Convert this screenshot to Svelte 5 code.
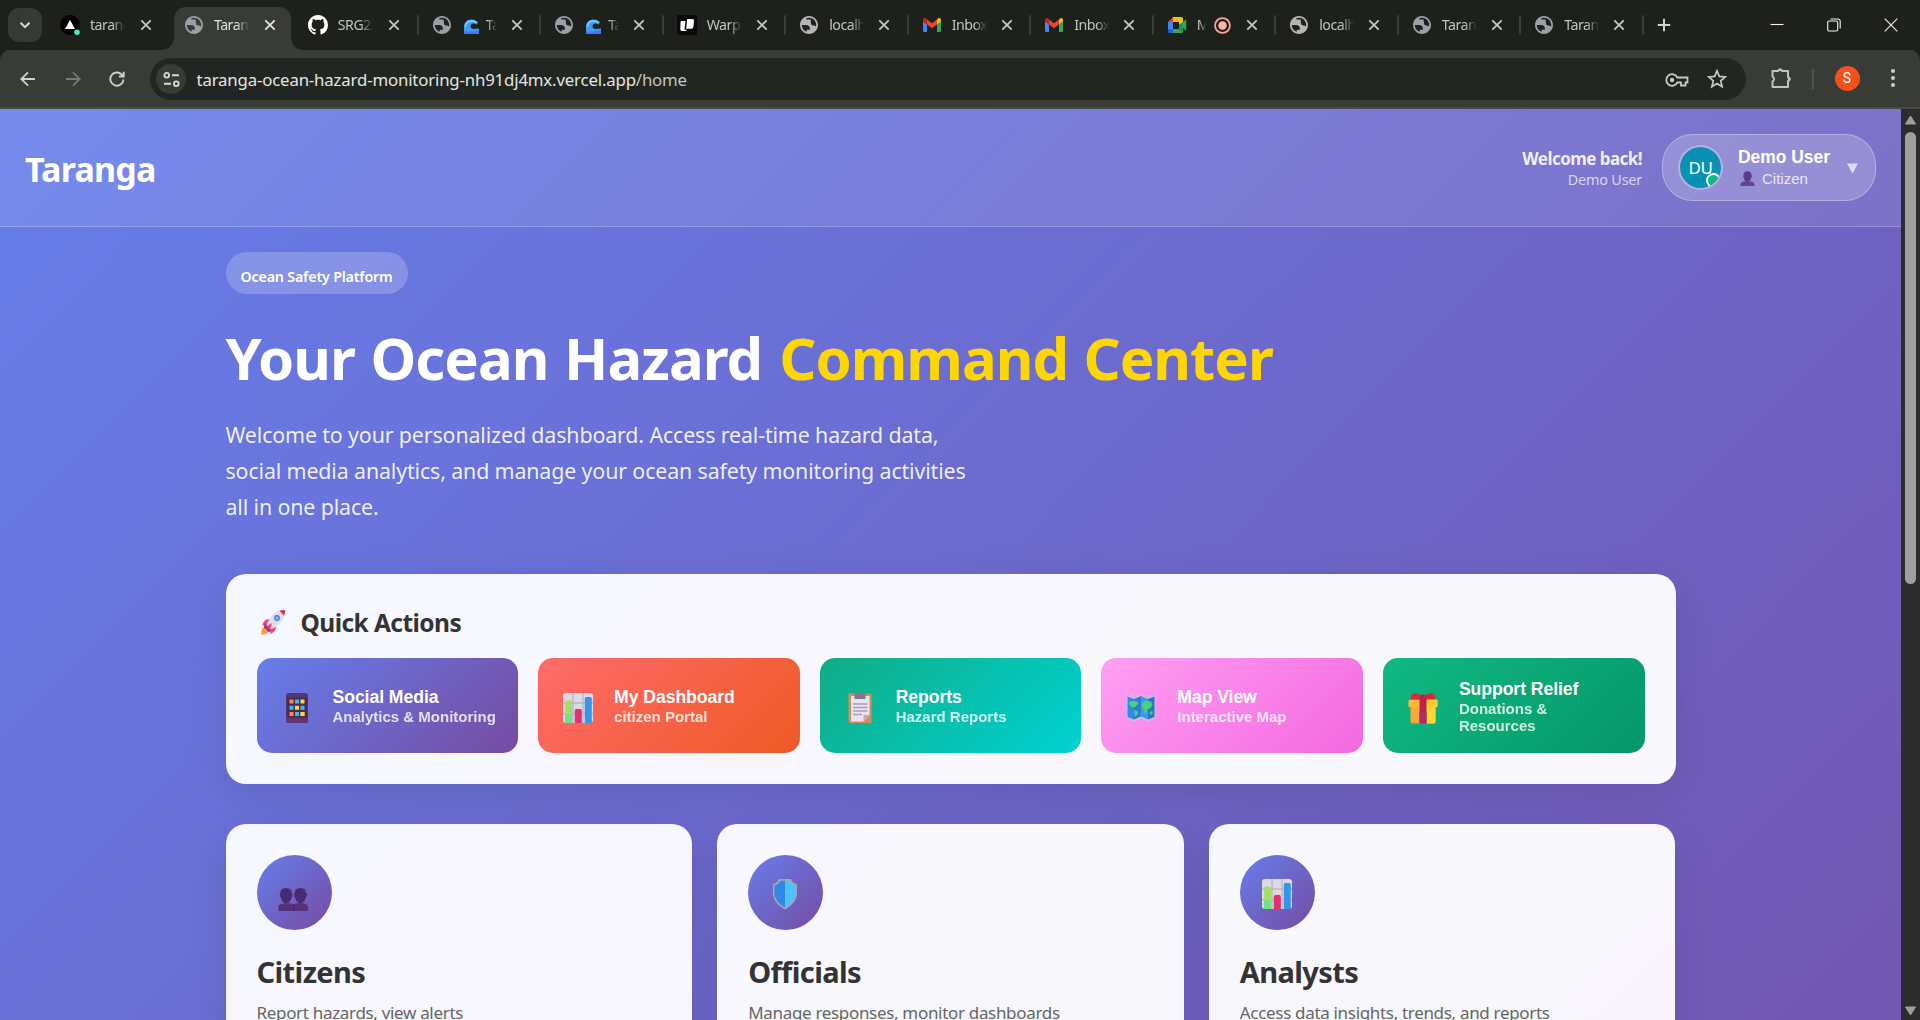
<script>
  const tabs = [
    { icon: 'vercel', title: 'taranga', wide: true, first: true },
    { icon: 'globe', title: 'Taranga', wide: true, active: true },
    { icon: 'github', title: 'SRG22', wide: true, sep: true },
    { icon: 'globe', title: 'Ta', wave: true, sep: true },
    { icon: 'globe', title: 'Ta', wave: true, sep: true },
    { icon: 'warp', title: 'Warp', sep: true },
    { icon: 'globe', title: 'localh', plain: true, sep: true },
    { icon: 'gmail', title: 'Inbox', sep: true },
    { icon: 'gmail', title: 'Inbox', sep: true },
    { icon: 'meet', title: 'M', rec: true, sep: true },
    { icon: 'globe', title: 'localh', plain: true, sep: true },
    { icon: 'globe', title: 'Taran', sep: true },
    { icon: 'globe', title: 'Taran', sep: true },
  ];

  const actions = [
    { kind: 'social', icon: 'phone', title: 'Social Media', sub: 'Analytics & Monitoring' },
    { kind: 'dashboard', icon: 'chart', title: 'My Dashboard', sub: 'citizen Portal' },
    { kind: 'reports', icon: 'clipboard', title: 'Reports', sub: 'Hazard Reports' },
    { kind: 'map', icon: 'map', title: 'Map View', sub: 'Interactive Map' },
    { kind: 'relief', icon: 'gift', title: 'Support Relief', sub: 'Donations & Resources' },
  ];

  const roles = [
    { icon: 'people', title: 'Citizens', text: 'Report hazards, view alerts' },
    { icon: 'shield', title: 'Officials', text: 'Manage responses, monitor dashboards' },
    { icon: 'chart', title: 'Analysts', text: 'Access data insights, trends, and reports' },
  ];
</script>

{#snippet favicon(name, plain)}
  {#if name === 'vercel'}
    <svg class="fav" viewBox="0 0 20 20">
      <circle cx="10" cy="10" r="10" fill="#000" />
      <path d="M10 5l5 9H5z" fill="#fff" />
      <circle cx="17" cy="17.3" r="2.8" fill="#50e3c2" />
    </svg>
  {:else if name === 'globe'}
    <svg class="fav globe" class:plain viewBox="2 2 20 20">
      <path d="M12 2C6.48 2 2 6.48 2 12s4.48 10 10 10 10-4.48 10-10S17.52 2 12 2zM4 12h4.4c3.4 0 4.9 1.7 4.6 5.2H9.5v2.4C6.2 18.6 4 15.6 4 12zm10-4.500c-.3-.7.1-1.100-.3-1.500H9V4.600C9.900 4.200 10.900 4 12 4c4.400 0 8 3.600 8 8 0 .6-.1 1.200-.2 1.800-.7-.8-1.500-1.300-2.600-1.300-2.800 0-3.200-1.600-3.200-5z" fill-rule="evenodd" />
    </svg>
  {:else if name === 'github'}
    <svg class="fav" viewBox="0 0 16 16">
      <path fill="#fff" d="M8 0C3.580 0 0 3.580 0 8c0 3.540 2.290 6.530 5.470 7.590.4.070.55-.17.55-.38 0-.19-.01-.82-.01-1.490-2.010.37-2.530-.49-2.690-.94-.09-.23-.48-.94-.82-1.130-.28-.15-.68-.52-.01-.53.63-.01 1.080.58 1.230.82.72 1.210 1.870.87 2.330.66.07-.52.28-.87.51-1.070-1.780-.2-3.640-.89-3.640-3.950 0-.87.31-1.590.82-2.150-.08-.2-.36-1.020.08-2.120 0 0 .67-.21 2.200.82.64-.18 1.320-.27 2-.27s1.360.09 2 .27c1.530-1.040 2.200-.82 2.200-.82.44 1.100.16 1.920.08 2.120.51.56.82 1.270.82 2.150 0 3.070-1.870 3.750-3.650 3.950.29.25.54.73.54 1.480 0 1.070-.01 1.930-.01 2.200 0 .21.15.46.55.38A8.010 8.010 0 0 0 16 8c0-4.420-3.580-8-8-8z" />
    </svg>
  {:else if name === 'warp'}
    <svg class="fav" viewBox="0 0 20 20">
      <rect width="20" height="20" fill="#0b0b0b" />
      <path d="M10.200 4h5a1.800 1.800 0 0 1 1.800 2l-.6 5.800a2 2 0 0 1-2 1.900H9.200zM4.800 6h3.700l-1 8.700h2l-.2 1.300H4.900A1.600 1.600 0 0 1 3.300 14.300l.2-7A1.400 1.400 0 0 1 4.800 6z" fill="#fff" />
    </svg>
  {:else if name === 'gmail'}
    <svg class="fav" viewBox="0 0 20 20">
      <path d="M1 6v9.500A1.500 1.500 0 0 0 2.500 17H5V9.500z" fill="#4285f4" />
      <path d="M19 6v9.500a1.500 1.500 0 0 1-1.500 1.500H15V9.500z" fill="#34a853" />
      <path d="M15 4.500v5L19 6.500V5c0-1.900-2-2.700-3.300-1.500z" fill="#fbbc04" />
      <path d="M5 9.500v-5l5 3.800 5-3.800v5l-5 3.800z" fill="#ea4335" />
      <path d="M1 5v1.500l4 3v-5L4.300 3.500C3 2.500 1 3.200 1 5z" fill="#c5221f" />
    </svg>
  {:else if name === 'meet'}
    <svg class="fav" viewBox="0 0 20 20">
      <path d="M1 7l5-5v5z" fill="#ea4335" />
      <path d="M1 7h5v7H1z" fill="#4285f4" />
      <path d="M1 14h5v4H2.500A1.500 1.500 0 0 1 1 16.500z" fill="#1967d2" />
      <path d="M6 14h6l4 3a1.500 1.500 0 0 1-1.500 1H6z" fill="#34a853" />
      <path d="M6 2h8.500A1.500 1.500 0 0 1 16 3.500V8l-4 2V7H6z" fill="#fbbc04" />
      <path d="M12 10l4-3v10l-4-3z" fill="#0f9d58" />
      <path d="M16 7l2.600-2.200c.3-.2.600 0 .600.300v9.800c0 .3-.3.500-.6.300L16 13z" fill="#34a853" />
    </svg>
  {/if}
{/snippet}

{#snippet cross()}
  <svg class="cross" viewBox="0 0 12 12"><path d="M1.300 1.300l9.400 9.400M10.700 1.300l-9.400 9.400" /></svg>
{/snippet}

{#snippet glyph(name)}
  {#if name === 'rocket'}
    <svg class="glyph" viewBox="0 0 36 36">
      <path d="M6 25c-1 3-1.500 5.500-1.200 7 1.800.2 5-.2 7-2 1.600-1.600 1.500-3.500.5-4.500s-4.500-2.300-6.300-.5z" fill="#ff9a2e" />
      <path d="M14 15c-4-1-7 2-8 7l6-1zM21 22c1 4-1 7.500-6 9.500l.5-7z" fill="#f8417f" />
      <path d="M31.500 4.500C23 4 16 9 10.500 21.500l4.500 5C26 22 32 14 31.500 4.500z" fill="#e3dbea" />
      <path d="M31.500 4.500c-2.300-.1-4.300.2-6.200.9l5.200 5.600c.7-2 1-4.200 1-6.500z" fill="#e9284b" />
      <path d="M9 19.500l7.500 8.200-3.200 1.800L7.500 24z" fill="#b02f86" />
      <path d="M11 23l6-4-2 7z" fill="#f23f6e" />
      <circle cx="22.500" cy="13.500" r="3.300" fill="#4f78c4" />
      <circle cx="22.500" cy="13.500" r="2" fill="#6fc0ff" />
    </svg>
  {:else if name === 'phone'}
    <svg class="glyph" viewBox="0 0 36 36">
      <rect x="7" y="3" width="22" height="30" rx="2.500" fill="#493b78" />
      <rect x="8" y="7.500" width="20" height="20" fill="#50284f" />
      <path d="M7 28h22v2.500A2.500 2.500 0 0 1 26.500 33h-17A2.500 2.500 0 0 1 7 30.500z" fill="#603475" />
      <path d="M10.500 9.500h4v4h-4zM21.500 22h4v4h-4zM10.500 22h4v4h-4z" fill="#ff8b42" />
      <path d="M16 9.500h4v4h-4zM10.500 15.700h4v4h-4zM21.500 15.700h4v4h-4zM16 22h4v4h-4z" fill="#37b9f6" />
      <path d="M21.500 9.500h4v4h-4zM16 15.700h4v4h-4zM21.500 22h4v4h-4z" fill="#ffd94a" />
    </svg>
  {:else if name === 'chart'}
    <svg class="glyph" viewBox="0 0 36 36">
      <rect x="3" y="3" width="30" height="30" rx="3" fill="#ded8e5" />
      <path d="M3 13h30M3 23.500h30M13 3v30M23 3v30" stroke="#bcb4c4" stroke-width="1.300" />
      <path d="M5.200 12a1.500 1.500 0 0 1 1.500-1.500H10.500A1.500 1.500 0 0 1 12 12v21H5.200z" fill="#a0e15f" />
      <path d="M5.200 24H12v9H5.200z" fill="#6fe283" />
      <path d="M14.800 20.500a1.500 1.500 0 0 1 1.500-1.500h4a1.500 1.500 0 0 1 1.500 1.500V33h-7z" fill="#e3306f" />
      <path d="M24.800 8.500A1.500 1.500 0 0 1 26.300 7h4a1.500 1.500 0 0 1 1.500 1.500V33h-7z" fill="#3496e8" />
    </svg>
  {:else if name === 'clipboard'}
    <svg class="glyph" viewBox="0 0 36 36">
      <rect x="6.500" y="3.500" width="23" height="29.500" rx="1.500" fill="#d98c5b" />
      <path d="M9 6h18.500v19l-6 6.500H9z" fill="#eae3f3" />
      <path d="M21.500 31.500V25h6z" fill="#b9aec2" />
      <path d="M12.500 3.500h3.300a2.300 2.300 0 0 1 4.400 0h3.300V9h-11z" fill="#837886" />
      <path d="M11 14h14.500M11 17.500h14.500M11 21h14.500M11 24.500h9" stroke="#a79db5" stroke-width="1.300" />
    </svg>
  {:else if name === 'map'}
    <svg class="glyph" viewBox="0 0 36 36">
      <path d="M3.500 4.500L11 7.500l7-3 7 3 7.500-3V28L25 31.500l-7-3-7 3L3.500 28z" fill="#c6c2de" />
      <path d="M4.500 6.500L11 9v20.500l-6.500-2.500z" fill="#2d8be6" />
      <path d="M11 9l7-3v20.500l-7 3z" fill="#2f7cd0" />
      <path d="M18 6l7 3v20.500l-7-3z" fill="#379bf0" />
      <path d="M25 9l6.500-2.500V27L25 29.500z" fill="#2b75c9" />
      <path d="M5.500 12.500l4-1.500 5 .500 1 2-3.500 3.500-2 .5-3-2zM11 20l4 1.500-.5 3-2.500 2.500zM19 13l4-2.500 5 1 1.500 3.500-2.500 3.500-2.500.5-1.500 4-2-.5-.5-4-2-2zM26.500 22l3-1v3l-2 1z" fill="#4bd17c" />
    </svg>
  {:else if name === 'gift'}
    <svg class="glyph" viewBox="0 0 36 36">
      <path d="M5.500 13h25v19a1.500 1.500 0 0 1-1.500 1.500H7A1.500 1.500 0 0 1 5.500 32z" fill="#f5a93b" />
      <path d="M21 13h9.500v19a1.500 1.500 0 0 1-1.500 1.500h-8z" fill="#fbd92e" />
      <path d="M5 9.500h26a1.500 1.500 0 0 1 1.500 1.500v6h-29v-6A1.500 1.500 0 0 1 5 9.500z" fill="#fdb73c" />
      <path d="M21 9.500h10a1.500 1.500 0 0 1 1.500 1.500v6H21z" fill="#ffcd33" />
      <path d="M6 9.500c-1.500-4 2-7.500 6-6l3 1.500h6l3.500-1.500c4-1.500 7 2 5.500 6z" fill="#de2839" />
      <path d="M14.500 5.500c1-1.500 6-1.500 7 0v28h-7z" fill="#bd2248" />
      <path d="M14.500 22h7v11.500h-7z" fill="#b12967" />
    </svg>
  {:else if name === 'people'}
    <svg class="glyph" viewBox="0 0 36 36">
      <path d="M2.500 35v-4.500c0-2 3-2.700 6-3.200h5c2 .3 3.500.5 4.200 1.200.7-.7 2.200-.9 4.200-1.200h5c3 .5 5 1.200 5 3.200V35z" fill="#57307c" />
      <path d="M17.700 28.500V35" stroke="#3f2163" stroke-width="1" />
      <path d="M4.500 17c0-3 1.200-4.700 5.700-4.700s5.700 1.700 5.700 4.700c1 .2.900 3.500-.2 4-.7 3.800-3 6.300-5.500 6.300s-4.800-2.500-5.500-6.300c-1.100-.5-1.200-3.800-.2-4zM18.800 17c0-3 1.200-4.700 5.700-4.700s5.700 1.700 5.700 4.700c1 .2.900 3.500-.2 4-.7 3.800-3 6.300-5.500 6.300s-4.800-2.500-5.500-6.300c-1.100-.5-1.200-3.800-.2-4z" fill="#472a70" />
      <path d="M13 13.500c1.500.6 2.200 1.700 2.200 3.500M27.300 13.500c1.500.6 2.200 1.700 2.200 3.500" stroke="#6b41a0" stroke-width="1" fill="none" />
    </svg>
  {:else if name === 'shield'}
    <svg class="glyph" viewBox="0 0 36 36">
      <path d="M12 3h12c1 3 3 4.500 6 5v9c0 7-5 12.500-12 16.500C11 29.500 6 24 6 17V8c3-.5 5-2 6-5z" fill="#a9a5ae" />
      <path d="M18 4.800h-4.800c-1 2.600-3 4.200-5.700 4.800V17c0 6 4.500 11 10.500 14.700z" fill="#2f87ea" />
      <path d="M18 4.800h4.800c1 2.600 3 4.200 5.700 4.800V17c0 6-4.500 11-10.500 14.700z" fill="#50c1ff" />
    </svg>
  {/if}
{/snippet}

<div class="window">
  <div class="tabstrip">
    <button class="tab-search" aria-label="Search tabs">
      <svg viewBox="0 0 14 14" width="14" height="14"><path d="M2.500 4.700L7 9.200l4.500-4.500" /></svg>
    </button>
    {#each tabs as t}
      <div class="tab" class:first={t.first} class:wide={t.wide} class:active={t.active} class:sep={t.sep}>
        {@render favicon(t.icon, t.plain)}
        {#if t.wave}
          <svg class="wave" viewBox="0 0 16 16">
            <path d="M0 16V8C0 3.500 3.500.5 8 .5c3.500 0 6 1.500 7.500 4L13 4.500l1 2-2-1.500c-3-1-5 .5-5 3 0 2 1.500 3 5 2.500l4-.5v6z" fill="#3f9bf3" />
            <path d="M1.500 8.500C1.500 5 4 2 8 2c2.500 0 4 .8 5.500 2.300" stroke="#6fd0ff" stroke-width="1.800" fill="none" />
            <path d="M0 12.500c4 1.500 10 1 16-.5v4H0z" fill="#3a7df0" />
          </svg>
        {/if}
        <span class="tab-title" class:narrow={t.wave} class:tiny={t.rec}>{t.title}</span>
        {#if t.rec}
          <svg class="rec" viewBox="0 0 16 16"><circle cx="8" cy="8" r="7" /><circle class="core" cx="8" cy="8" r="4" /></svg>
        {/if}
        {@render cross()}
      </div>
    {/each}
    <svg class="new-tab" viewBox="0 0 14 14"><path d="M7 .8v12.400M.8 7h12.400" /></svg>
    <div class="window-buttons">
      <svg viewBox="0 0 14 14"><path d="M.5 6.500h13" /></svg>
      <svg viewBox="0 0 14 14"><path d="M.7 4.500A1.500 1.500 0 0 1 2.200 3h7A1.500 1.500 0 0 1 10.700 4.500v7a1.500 1.500 0 0 1-1.500 1.500h-7A1.500 1.500 0 0 1 .7 11.500zM3.500 1h7.300A2.300 2.300 0 0 1 13.200 3.300v7.200" /></svg>
      <svg viewBox="0 0 14 14"><path d="M.7.7l12.600 12.600M13.300.7L.7 13.300" /></svg>
    </div>
  </div>

  <div class="toolbar">
    <svg class="nav" viewBox="0 0 16 16"><path d="M15 8H1.500M8 1.300L1.300 8 8 14.700" /></svg>
    <svg class="nav dim" viewBox="0 0 16 16"><path d="M1 8h13.500M8 1.300L14.700 8 8 14.700" /></svg>
    <svg class="nav reload" viewBox="0 0 16 16"><path d="M14.500 8.500A6.600 6.600 0 1 1 12.700 3.500L14.500 5.300M14.700.8v4.700H10" /></svg>
    <div class="omnibox">
      <span class="site">
        <svg viewBox="0 0 16 16"><circle cx="3.500" cy="4" r="2.200" /><path d="M8.500 4H15M1 12h6.500" /><circle cx="12.500" cy="12" r="2.200" /></svg>
      </span>
      <span class="url">taranga-ocean-hazard-monitoring-nh91dj4mx.vercel.app<span class="path">/home</span></span>
      <svg class="key" viewBox="0 0 24 14">
        <path d="M12.300 4.500h10.200v5h-2v3h-4.500v-3h-3.700A5.800 5.800 0 1 1 12.300 4.500z" />
        <circle cx="7" cy="7" r="2.200" />
      </svg>
      <svg class="star" viewBox="0 0 20 20"><path d="M10 1.800l2.300 5.600 6 .5-4.600 3.900 1.400 5.900L10 14.500l-5.100 3.200 1.400-5.900L1.700 7.900l6-.5z" /></svg>
    </div>
    <svg class="puzzle" viewBox="0 0 22 22">
      <path d="M2.500 4h5.700a2 2 0 0 1 3.800 0H18v6.200a2 2 0 0 1 0 3.800v6H2.500v-5.500a2.800 2.800 0 0 0 0-5z" />
      <path class="solid" d="M7.500 4a2.600 2.600 0 0 1 5.200 0zM18 9.500a2.600 2.600 0 0 1 0 5.200z" />
    </svg>
    <span class="bar"></span>
    <span class="profile">S</span>
    <svg class="dots" viewBox="0 0 4 18"><circle cx="2" cy="2" r="2" /><circle cx="2" cy="9" r="2" /><circle cx="2" cy="16" r="2" /></svg>
  </div>

  <div class="viewport">
    <div class="page">
      <header>
        <div class="logo">Taranga</div>
        <div class="welcome">
          <div class="hello">Welcome back!</div>
          <div class="name">Demo User</div>
        </div>
        <div class="user">
          <div class="avatar">DU<span class="online"></span></div>
          <div class="who">
            <div class="who-name">Demo User</div>
            <div class="who-role">
              <svg viewBox="0 0 16 16">
                <path d="M.5 16v-2c0-2 2.500-2.500 5.500-3h4c3 .5 5.500 1 5.500 3v2z" fill="#65429c" />
                <path d="M3.800 4.500C3.800 1.500 5 .3 8 .3s4.200 1.200 4.200 4.200c.7 0 .7 2-.1 2.300C11.500 9.500 10 11.500 8 11.500S4.500 9.500 3.900 6.800c-.8-.3-.8-2.300-.1-2.300z" fill="#5b3c8e" />
              </svg>
              <span>Citizen</span>
            </div>
          </div>
          <svg class="caret" viewBox="0 0 12 11"><path d="M0 0h12L6 11z" /></svg>
        </div>
      </header>

      <main>
        <div class="badge">Ocean Safety Platform</div>
        <h1>Your Ocean Hazard <span>Command Center</span></h1>
        <p class="lead">
          Welcome to your personalized dashboard. Access real-time hazard data,<br />social media analytics, and manage your ocean safety monitoring activities<br />all in one place.
        </p>

        <section class="quick">
          <h2>{@render glyph('rocket')}Quick Actions</h2>
          <div class="actions">
            {#each actions as a}
              <button class="action {a.kind}">
                {@render glyph(a.icon)}
                <span class="labels"><span class="title">{a.title}</span><span class="sub">{a.sub}</span></span>
              </button>
            {/each}
          </div>
        </section>

        <section class="roles">
          {#each roles as r}
            <article>
              <div class="disc {r.icon}">{@render glyph(r.icon)}</div>
              <h3>{r.title}</h3>
              <p>{r.text}</p>
            </article>
          {/each}
        </section>
      </main>
    </div>
    <div class="scrollbar">
      <svg class="up" viewBox="0 0 12 10"><path d="M6 1l5 8H1z" /></svg>
      <div class="track"><div class="thumb"></div></div>
      <svg class="down" viewBox="0 0 12 10"><path d="M6 9l5-8H1z" /></svg>
    </div>
  </div>
</div>

<style>
  :global(body) { margin: 0; overflow: hidden; background: #1d201b; }
  .window {
    width: 1920px; height: 1020px; overflow: hidden; display: flex; flex-direction: column;
    font-family: 'Noto Sans', 'Open Sans', sans-serif;
  }
  svg { display: block; flex: none; }
  button { border: 0; margin: 0; padding: 0; text-align: left; }

  /* tab strip */
  .tabstrip { height: 50px; flex: none; display: flex; align-items: center; background: #1d201b; }
  .tab-search {
    width: 34px; height: 34px; margin: 0 3px 0 8px; border-radius: 11px; background: #363a34;
    display: flex; align-items: center; justify-content: center; flex: none;
  }
  .tab-search path { fill: none; stroke: #d8dcd2; stroke-width: 2; }
  .tab {
    position: relative; box-sizing: border-box; width: 122.500px; height: 50px; padding: 0 12px 0 14px;
    display: flex; align-items: center; flex: none; color: #c2c6bd;
  }
  .tab.first { margin-left: 1px; }
  .tab.wide { width: 123.900px; }
  .fav { width: 20px; height: 20px; margin-right: 10px; }
  .globe { width: 18px; height: 18px; margin: 0 11px 0 1px; fill: #9aa0a8; }
  .globe.plain { fill: #b5b5b5; }
  .wave { width: 15px; height: 15px; margin: 2px 7px 0 2px; }
  .tab-title {
    width: 36px; overflow: hidden; white-space: nowrap; font-size: 14.200px; letter-spacing: -0.500px; line-height: 22px; margin-top: -1px;
    mask-image: linear-gradient(90deg, #000 62%, transparent 98%);
  }
  .tab-title.narrow { width: 12px; mask-image: linear-gradient(90deg, #000 10%, transparent 95%); }
  .tab-title.tiny { width: 9px; margin-right: 8px; mask-image: linear-gradient(90deg, #000 30%, transparent 105%); }
  .cross { width: 12px; height: 12px; margin-left: auto; margin-right: 5.500px; }
  .cross path { fill: none; stroke: #c5c9c0; stroke-width: 1.800; }
  .rec { width: 17px; height: 17px; }
  .rec circle { fill: none; stroke: #f3a99c; stroke-width: 1.700; }
  .rec .core { fill: #ffb4a6; stroke: none; }
  .tab.active::before {
    content: ''; position: absolute; left: 4px; right: 3px; top: 7px; bottom: 0; background: #393c36;
    border-radius: 12px 12px 0 0;
  }
  .tab.active::after {
    content: ''; position: absolute; left: -8px; right: -9px; bottom: 0; height: 12px;
    background:
      radial-gradient(circle at 0 0, transparent 11.500px, #393c36 12px) left / 12px 12px no-repeat,
      radial-gradient(circle at 100% 0, transparent 11.500px, #393c36 12px) right / 12px 12px no-repeat;
  }
  .tab.active > :global(*) { z-index: 1; }
  .tab.active { color: #dfe2db; }
  .tab.active .cross path { stroke: #e3e6df; }
  .tab.sep::after {
    content: ''; position: absolute; right: -1px; top: 15px; width: 2px; height: 20px; border-radius: 1px; background: #393d37;
  }
  .new-tab { width: 14px; height: 14px; margin-left: 14.500px; }
  .new-tab path { stroke: #d0d4cb; stroke-width: 2; }
  .window-buttons { display: flex; gap: 43px; margin-left: auto; margin-right: 22px; }
  .window-buttons svg { width: 14px; height: 14px; }
  .window-buttons path { fill: none; stroke: #f1f2ef; stroke-width: 1.100; }

  /* toolbar */
  .toolbar {
    height: 59px; flex: none; box-sizing: border-box; padding: 8px 25.500px 9px 20px; border-bottom: 2px solid #474a47;
    display: flex; align-items: flex-start; background: #393c36;
    border-radius: 10px 10px 0 0;
  }
  .nav { width: 16px; height: 16px; margin: 13px 28.500px 0 0; }
  .nav path { fill: none; stroke: #cdd1c8; stroke-width: 1.900; }
  .nav.dim path { stroke: #767a72; }
  .nav.reload { margin-right: 25px; }
  .omnibox {
    width: 1596px; height: 42px; border-radius: 21px; background: #222622; box-sizing: border-box; flex: none;
    padding: 0 19px 0 6px; display: flex; align-items: center;
  }
  .site { width: 30px; height: 30px; border-radius: 50%; background: #383c36; display: flex; align-items: center; justify-content: center; }
  .site svg { width: 17px; height: 17px; }
  .site svg * { fill: none; stroke: #d8dcd3; stroke-width: 1.700; }
  .url { margin-left: 10.500px; margin-top: 1px; font-size: 16.800px; letter-spacing: -0.160px; color: #e4e7e0; line-height: 24px; }
  .path { color: #c3c7be; }
  .key { width: 24px; height: 14px; margin-left: auto; margin-top: 1px; }
  .key path { fill: none; stroke: #c6cac1; stroke-width: 1.800; }
  .key circle { fill: #c6cac1; }
  .star { width: 20px; height: 20px; margin-left: 18px; }
  .star path { fill: none; stroke: #c6cac1; stroke-width: 1.700; }
  .puzzle { width: 22px; height: 22px; margin: 9px 0 0 24px; }
  .puzzle path { fill: none; stroke: #c0c4bb; stroke-width: 2; stroke-linejoin: round; }
  .puzzle .solid { fill: #c0c4bb; stroke: none; }
  .bar { width: 2px; height: 20px; margin: 11px 0 0 20px; background: #50544d; }
  .profile {
    width: 25px; height: 25px; margin: 8px 0 0 20.500px; border-radius: 50%; background: #f4511e; color: #fff;
    font: 14px/25px Roboto, sans-serif; text-align: center; flex: none;
  }
  .dots { width: 4px; height: 18px; margin: 11px 0 0 auto; fill: #cdd1c8; }

  /* page */
  .viewport { flex: 1; min-height: 0; display: flex; overflow: hidden; background: #2c2c2c; }
  .page { width: 1901px; height: 1748px; flex: none; background: linear-gradient(135deg, #667eea 0%, #764ba2 100%); }
  header {
    box-sizing: border-box; height: 118px; padding: 0 25px; display: flex; align-items: center;
    background: rgba(255, 255, 255, 0.1); border-bottom: 1px solid rgba(255, 255, 255, 0.200);
  }
  .logo { font-size: 34px; font-weight: 700; letter-spacing: -0.800px; color: #fff; margin-top: 3px; }
  .welcome { margin-left: auto; text-align: right; margin-right: 20px; }
  .hello { font-size: 17px; font-weight: 700; letter-spacing: -0.550px; line-height: 23px; color: rgba(255, 255, 255, 0.9); }
  .name { font-size: 14.400px; letter-spacing: -0.200px; line-height: 19px; color: rgba(255, 255, 255, 0.7); }
  .user {
    box-sizing: border-box; width: 214px; height: 67px; border-radius: 31px; padding: 0 17px 0 15px;
    display: flex; align-items: center; background: rgba(255, 255, 255, 0.200); border: 1px solid rgba(255, 255, 255, 0.300);
    font-family: 'Liberation Sans', Arial, sans-serif;
  }
  .avatar {
    position: relative; box-sizing: border-box; width: 45px; height: 45px; border-radius: 50%; overflow: hidden;
    border: 2px solid rgba(255, 255, 255, 0.3); background: #0891b2; background-clip: padding-box; color: #fff;
    font: 17px/41px 'Noto Sans', sans-serif; letter-spacing: -0.300px; text-align: center;
  }
  .online {
    position: absolute; right: 0; bottom: 0; width: 11px; height: 11px; border-radius: 50%;
    background: #10b981; border: 2px solid #fff;
  }
  .who { margin-left: 15px; }
  .who-name { font-size: 17.500px; line-height: 20px; font-weight: 700; color: #fff; letter-spacing: -0.050px; }
  .who-role { display: flex; align-items: center; margin-top: 2px; font-size: 15px; line-height: 19px; color: rgba(255, 255, 255, 0.800); }
  .who-role svg { width: 15px; height: 15px; margin: 0 7px 0 2px; }
  .caret { width: 11px; height: 11px; margin-left: auto; margin-top: 1px; fill: rgba(255, 255, 255, 0.700); }

  main { width: 1450px; margin: 0 auto; padding-top: 25px; }
  .badge {
    display: block; width: fit-content; height: 42px; box-sizing: border-box; padding: 10px 15px 0; border-radius: 21px;
    background: rgba(255, 255, 255, 0.2); color: #fff; font-size: 14.300px; font-weight: 600; letter-spacing: -0.200px; line-height: 30px;
  }
  h1 { margin: 27.500px 0 0; font-size: 58px; line-height: 72px; font-weight: 700; letter-spacing: -0.930px; word-spacing: 1.200px; color: #fff; }
  h1 span { color: #ffd700; margin-left: 1.500px; letter-spacing: -0.960px; }
  .lead { margin: 23px 0 0; font-size: 21.400px; line-height: 36px; letter-spacing: -0.140px; color: rgba(255, 255, 255, 0.9); }
  .quick {
    margin-top: 49.500px; box-sizing: border-box; height: 210px; padding: 30px 31px 0; border-radius: 20px;
    background: rgba(255, 255, 255, 0.95); box-shadow: 0 10px 40px rgba(0, 0, 0, 0.1);
  }
  h2 { margin: 0; display: flex; align-items: center; gap: 12px; height: 36px; font-size: 24.500px; font-weight: 700; letter-spacing: -0.560px; color: #333; }
  h2 .glyph { width: 32px; height: 32px; margin: 0; }
  .glyph { width: 36px; height: 36px; }
  .actions { margin-top: 18px; display: grid; grid-template-columns: repeat(5, 1fr); gap: 20px; }
  .action {
    height: 95px; border-radius: 15px; padding: 0 20px 0 22px; display: flex; align-items: center; gap: 18px;
    font-family: 'Liberation Sans', Arial, sans-serif; font-weight: 700; color: #fff; box-sizing: border-box;
  }
  .action .glyph { margin-top: 4px; }
  .labels { display: flex; flex-direction: column; gap: 1px; padding-top: 1px; }
  .title { font-size: 17.600px; line-height: 20px; letter-spacing: -0.050px; }
  .sub { font-size: 15px; line-height: 17px; opacity: 0.8; }
  .social { background: linear-gradient(135deg, #667eea, #764ba2); }
  .dashboard { background: linear-gradient(135deg, #ff6b6b, #ee5a24); }
  .reports { background: linear-gradient(135deg, #10ac84, #00d2d3); }
  .map { background: linear-gradient(135deg, #ff9ff3, #f368e0); }
  .relief { background: linear-gradient(135deg, #10b981, #059669); }

  .roles { margin-top: 40px; display: grid; grid-template-columns: repeat(3, 1fr); gap: 25px; }
  article {
    box-sizing: border-box; height: 340px; padding: 31px; border-radius: 20px;
    background: rgba(255, 255, 255, 0.95); box-shadow: 0 10px 40px rgba(0, 0, 0, 0.1);
  }
  .disc {
    width: 75px; height: 75px; border-radius: 50%; display: flex; align-items: center; justify-content: center;
    background: linear-gradient(135deg, #667eea, #764ba2);
  }
  .disc .glyph { margin: 2px 1px 0 0; }
  h3 { margin: 21.600px 0 0; font-size: 29px; line-height: 40px; font-weight: 700; letter-spacing: -0.600px; color: #333; }
  article p { margin: 7.500px 0 0; font-size: 17px; line-height: 28px; letter-spacing: -0.320px; color: #666; }

  /* scrollbar */
  .scrollbar { width: 19px; flex: none; display: flex; flex-direction: column; align-items: center; background: #2c2c2c; padding: 6px 0 4px; box-sizing: border-box; }
  .scrollbar svg { width: 13px; height: 10px; fill: #9f9f9f; stroke: #9f9f9f; stroke-width: 1; stroke-linejoin: round; }
  .track { flex: 1; padding-top: 7px; }
  .thumb { width: 11px; height: 452px; border-radius: 6px; background: #9f9f9f; }
</style>
